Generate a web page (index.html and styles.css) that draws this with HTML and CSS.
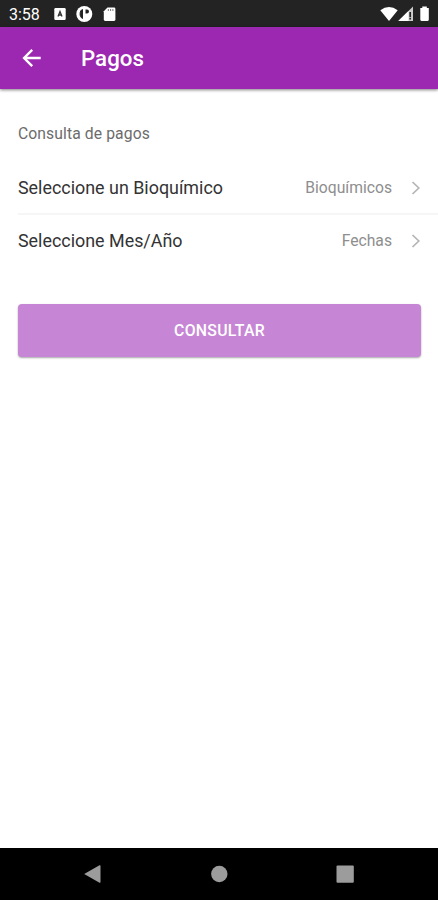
FILE: index.html
```html
<!DOCTYPE html>
<html lang="es">
<head>
<meta charset="utf-8">
<title>Pagos</title>
<link rel="stylesheet" href="styles.css">
</head>
<body>
<div class="screen">
  <div class="status">
    <span class="clock">3:58</span>
    <svg class="notifications" width="66" height="27" viewBox="0 0 66 27">
      <rect x="0.3" y="8" width="11.4" height="12" rx="1.2" fill="#fff"/>
      <path d="M4 16.500 6 11.500 8 16.500M4.800 15H7.200" fill="none" stroke="#333" stroke-width="1.300"/>
      <circle cx="30.3" cy="14" r="8" fill="#fff"/>
      <path d="M28.500 9.500C25.500 10 25 17 28.500 18.500V9.500" fill="#222" stroke="#222" stroke-width="1"/>
      <path d="M31.500 9.600h1.500a2 2 0 0 1 0 4H31.500z" fill="#222"/>
      <path d="M53.5 7.5H60a1.4 1.4 0 0 1 1.4 1.4v10.6A1.4 1.4 0 0 1 60 20.900H51.200a1.400 1.400 0 0 1-1.400-1.400V11.200z" fill="#fff"/>
      <path d="M54.300 9v2M56.600 9v2M58.900 9v2" stroke="#777" stroke-width="1"/>
    </svg>
    <svg class="signals" width="54" height="27" viewBox="0 0 54 27">
      <path d="M0.300 10.300Q9 3.700 17.700 10.300L9 21z" fill="#fff"/>
      <path d="M18.300 21 33 6.500V21z" fill="#ccc"/>
      <path d="M18.300 21 28.500 11V21z" fill="#fff"/>
      <path d="M30.200 12v5.200M30.200 18v1.500" stroke="#222" stroke-width="1.700"/>
      <path d="M42.300 6.600h4.500v1.500h2v1.300V19.500a1.500 1.500 0 0 1-1.500 1.500h-5.500a1.500 1.500 0 0 1-1.500-1.500V8.100h2z" fill="#fff"/>
    </svg>
  </div>
  <header class="toolbar">
    <svg width="20" height="20" viewBox="0 0 20 20"><path d="M18.700 10H2.300M10.200 1.900 2.100 10l8.100 8.100" fill="none" stroke="#fff" stroke-width="2.400"/></svg>
    <h1 class="title">Pagos</h1>
  </header>
  <main class="content">
    <h2 class="caption">Consulta de pagos</h2>
    <div class="item divided">
      <span class="label">Seleccione un Bioquímico</span>
      <span class="value">Bioquímicos</span>
      <svg class="chevron" width="10" height="16" viewBox="0 0 10 16"><path d="M1.500 2 7.800 8 1.500 14" fill="none" stroke="#b5b5b5" stroke-width="1.700"/></svg>
    </div>
    <div class="item">
      <span class="label">Seleccione Mes/Año</span>
      <span class="value">Fechas</span>
      <svg class="chevron" width="10" height="16" viewBox="0 0 10 16"><path d="M1.500 2 7.800 8 1.500 14" fill="none" stroke="#b5b5b5" stroke-width="1.700"/></svg>
    </div>
    <button class="submit">CONSULTAR</button>
  </main>
  <nav class="navbar">
    <svg width="438" height="52" viewBox="0 0 438 52" fill="#9c9c9c">
      <path d="M84.200 26 99.500 17.300q1-.4 1 .7V34q0 1.100-1 .7z"/>
      <circle cx="219.300" cy="26" r="8.200"/>
      <rect x="336.500" y="17.500" width="17.300" height="17.300" rx="1"/>
    </svg>
  </nav>
</div>
</body>
</html>
```
FILE: styles.css
```css
* { box-sizing: border-box; }
body { margin: 0; background: #fff; font-family: Roboto, sans-serif; }
.screen { width: 438px; height: 900px; display: flex; flex-direction: column; overflow: hidden; }
.status { height: 27px; flex: none; background: #232323; display: flex; align-items: center; padding: 0 4px 0 9px; }
.clock { width: 45px; padding-top: 2px; color: #fff; font-size: 16px; line-height: 20px; }
.signals { margin-left: auto; }
.toolbar { height: 62px; flex: none; background: #9c27b0; display: flex; align-items: center; padding-left: 22px; gap: 39px; box-shadow: 0 1px 3px rgba(0, 0, 0, .5); }
.title { margin: 0; color: #fff; font-size: 22.300px; font-weight: 500; line-height: 28px; }
.content { flex: 1; padding: 35px 0 0 18px; }
.caption { margin: 0 0 17px; color: #6c6c6c; font-size: 15.700px; font-weight: 400; letter-spacing: .1px; line-height: 20px; }
.item { height: 52px; display: flex; align-items: center; padding-right: 17px; }
.divided { height: 54px; padding-top: 1px; border-bottom: 2px solid #f6f6f6; }
.label { color: #333; font-size: 17.900px; line-height: 20px; }
.value { margin-left: auto; color: #8e8e8e; font-size: 15.700px; line-height: 18px; }
.chevron { margin-left: 19px; }
.submit { display: block; width: 403px; height: 53px; margin-top: 37px; padding: 0; border: 0; border-radius: 4px; background: #c786d5; color: #fff; font: 500 15.800px Roboto, sans-serif; letter-spacing: .3px; box-shadow: 0 1px 2px rgba(0, 0, 0, .35); }
.navbar { height: 52px; flex: none; background: #000; }
.navbar svg { display: block; }
```
